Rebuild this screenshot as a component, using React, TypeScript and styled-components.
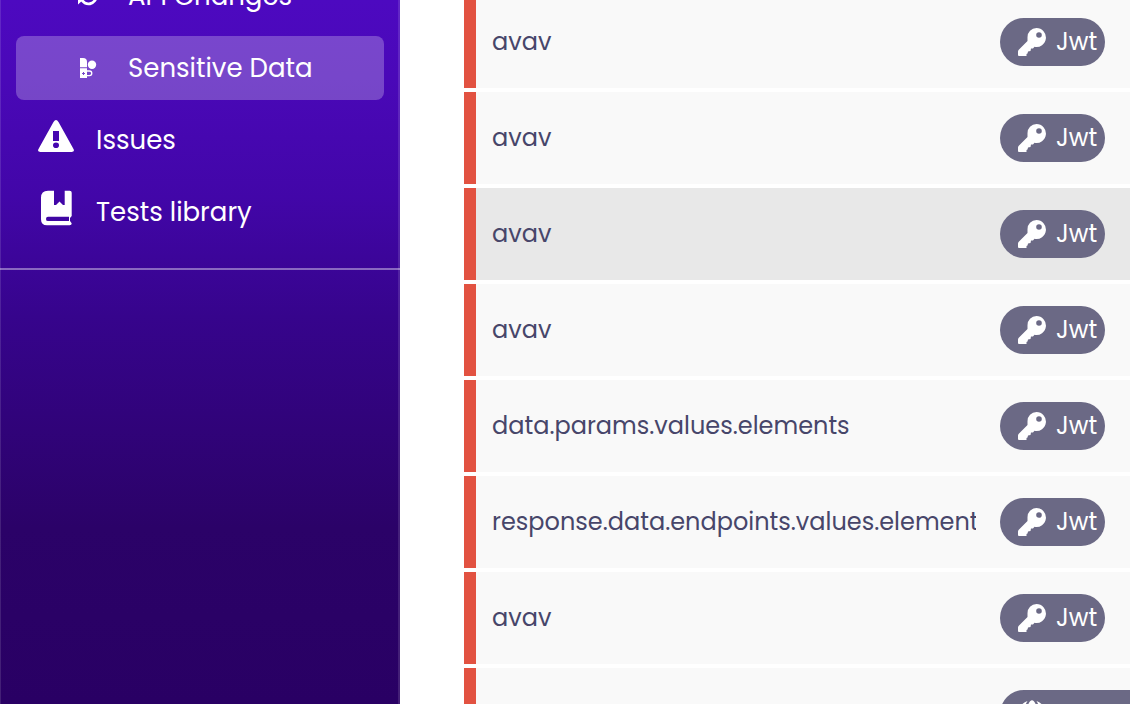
import React from "react";
import styled, { createGlobalStyle } from "styled-components";

const GlobalStyle = createGlobalStyle`
  *, *::before, *::after { box-sizing: border-box; }
  body {
    margin: 0;
    background: #ffffff;
    font-family: Poppins, Inter, "Open Sans", sans-serif;
  }
`;

const Shell = styled.div`
  display: flex;
  height: 100vh;
  overflow: hidden;
`;

const Sidebar = styled.aside`
  flex: 0 0 400px;
  border-left: 1px solid rgba(255, 255, 255, 0.12);
  border-right: 2px solid rgba(255, 255, 255, 0.12);
  background: linear-gradient(180deg, #4d09c0 0%, #4a08b8 11%, #4206a8 28%, #36048c 45%, #2b0268 75%, #290064 100%) border-box;
`;

const NavList = styled.nav`
  display: flex;
  flex-direction: column;
  gap: 8px;
  margin: -36px -2px 0 -1px;
  padding: 0 16px 24px;
  border-bottom: 2px solid rgba(255, 255, 255, 0.4);
`;

const NavLink = styled.a<{ $active?: boolean; $nested?: boolean }>`
  display: flex;
  align-items: center;
  gap: ${(p) => (p.$nested ? 28 : 20)}px;
  height: 64px;
  padding-left: ${(p) => (p.$nested ? 60 : 20)}px;
  border-radius: 8px;
  background: ${(p) => (p.$active ? "rgba(255, 255, 255, 0.25)" : "transparent")};
  color: #ffffff;
  font-size: 26px;
  line-height: 40px;
  text-decoration: none;
  white-space: nowrap;

  svg { flex: none; }
`;

const Main = styled.main`
  flex: 1;
  min-width: 0;
  padding-left: 64px;
  overflow: hidden;
`;

const DataTable = styled.table`
  width: 100%;
  margin-top: -8px;
  table-layout: fixed;
  border-collapse: separate;
  border-spacing: 0 4px;
  color: #47466a;
  font-size: 24px;
  line-height: 40px;
`;

const Row = styled.tr<{ $hovered?: boolean }>`
  height: 92px;
  background: ${(p) => (p.$hovered ? "#e8e8e8" : "#f9f9f9")};
`;

const PathCell = styled.td`
  width: 536px;
  padding: 0 24px 0 16px;
  border-left: 12px solid #e25241;
`;

const Path = styled.div`
  overflow: hidden;
  white-space: nowrap;
`;

const TypeCell = styled.td`
  padding: 0;
`;

const Chip = styled.span<{ $wide?: boolean }>`
  display: flex;
  align-items: center;
  gap: 10px;
  width: ${(p) => (p.$wide ? 240 : 105)}px;
  height: 48px;
  padding-left: 18px;
  border-radius: 24px;
  background: #6b6985;
  color: #ffffff;
  white-space: nowrap;

  svg { flex: none; }
`;

const ChangesIcon = () => (
  <svg width="24" height="24" viewBox="0 0 24 24" fill="none" stroke="#fff" strokeWidth="3" aria-hidden="true">
    <path d="M5 8a8 8 0 0 1 14-1M20 12a7.500 7.500 0 0 1-14.500 3" />
    <path d="M2 20.500V13h7.500v3H7z" fill="#fff" stroke="none" />
  </svg>
);

const SensitiveIcon = () => (
  <svg width="24" height="24" viewBox="0 0 24 24" fill="#fff" aria-hidden="true">
    <path d="M4 2h3a4 4 0 0 1 4 4v5.300H4z" />
    <circle cx="16" cy="8.800" r="4.200" />
    <path fillRule="evenodd" d="M4 12.200h7V22H4zM7 16v1H6v1h1v1h1v-1h1v-1H8v-1z" />
    <path d="M11 15h2.500a2.300 2.300 0 0 1 0 4.600H11" fill="none" stroke="#fff" strokeWidth="1.300" />
  </svg>
);

const IssuesIcon = () => (
  <svg width="40" height="40" viewBox="0 0 40 40" aria-hidden="true">
    <path fill="#fff" fillRule="evenodd" d="M17.500 2q2.500-4 5 0l15 27q1.500 3-2 3h-31q-3.500 0-2-3zM17 11v10h6V11zM20 22.500a3 2.800 0 1 0 0 5.600a3 2.800 0 1 0 0-5.600z" />
  </svg>
);

const LibraryIcon = () => (
  <svg width="40" height="44" viewBox="0 -2 40 44" aria-hidden="true">
    <path fill="#fff" fillRule="evenodd" d="M12-1.300h6V13h2l3.500-3.500L27 13h1.700V-1.300h5q2 0 2 2V24l-1.700 2v3l1.700 2.300q0 2-2 2H11q-6 0-6-6V5.700q0-7 7-7zM12 24.700q-2 0-2 2.200t2 2.200h21v-4.400z" />
  </svg>
);

const KeyIcon = () => (
  <svg width="28" height="28" viewBox="0 0 28 28" aria-hidden="true">
    <path fill="#fff" fillRule="evenodd" d="M18.500 0a9.500 9.500 0 1 1-2 18.800L15 20.500h-2l-.5 2.500-2.500.5-.5 2-1 .5V28H1q-1 0-1-1v-3.500q0-1 1-2l8.500-8.500V9.500A9.200 9.200 0 0 1 18.500 0zM21 4.200a2.800 2.800 0 1 0 0 5.600a2.800 2.800 0 1 0 0-5.600z" />
  </svg>
);

const GlobeIcon = () => (
  <svg width="28" height="28" viewBox="0 0 28 28" fill="#fff" aria-hidden="true">
    <path d="M14 .3c2.500 0 5 5 5.200 12.200H8.800C9 5.300 11.500.3 14 .3zM8.800 15.500h10.400c-.2 7.200-2.700 12.200-5.200 12.200s-5-5-5.200-12.200z" />
    <path d="M9.500 1.100C7.500 4 6.300 8 6.200 12.500H.1C.6 7.200 4.400 2.800 9.500 1.100zM18.500 1.100c5.100 1.700 8.900 6.100 9.400 11.400h-6.100C21.700 8 20.500 4 18.500 1.100zM.1 15.500h6.100c.1 4.500 1.300 8.500 3.300 11.400C4.400 25.200.6 20.800.1 15.500zM21.800 15.500h6.100c-.5 5.300-4.300 9.700-9.400 11.400 2-2.900 3.200-6.900 3.300-11.400z" />
  </svg>
);

const paths = [
  "avav",
  "avav",
  "avav",
  "avav",
  "data.params.values.elements",
  "response.data.endpoints.values.elements",
  "avav",
];

export default function App() {
  return (
    <Shell>
      <GlobalStyle />
      <Sidebar>
        <NavList aria-label="Main">
          <NavLink href="#changes" $nested><ChangesIcon />API Changes</NavLink>
          <NavLink href="#sensitive" $nested $active aria-current="page"><SensitiveIcon />Sensitive Data</NavLink>
          <NavLink href="#issues"><IssuesIcon />Issues</NavLink>
          <NavLink href="#tests"><LibraryIcon />Tests library</NavLink>
        </NavList>
      </Sidebar>
      <Main>
        <DataTable>
          <tbody>
            {paths.map((path, i) => (
              <Row key={i} $hovered={i === 2}>
                <PathCell><Path>{path}</Path></PathCell>
                <TypeCell><Chip><KeyIcon />Jwt</Chip></TypeCell>
              </Row>
            ))}
            <Row>
              <PathCell />
              <TypeCell><Chip $wide><GlobeIcon /></Chip></TypeCell>
            </Row>
          </tbody>
        </DataTable>
      </Main>
    </Shell>
  );
}
